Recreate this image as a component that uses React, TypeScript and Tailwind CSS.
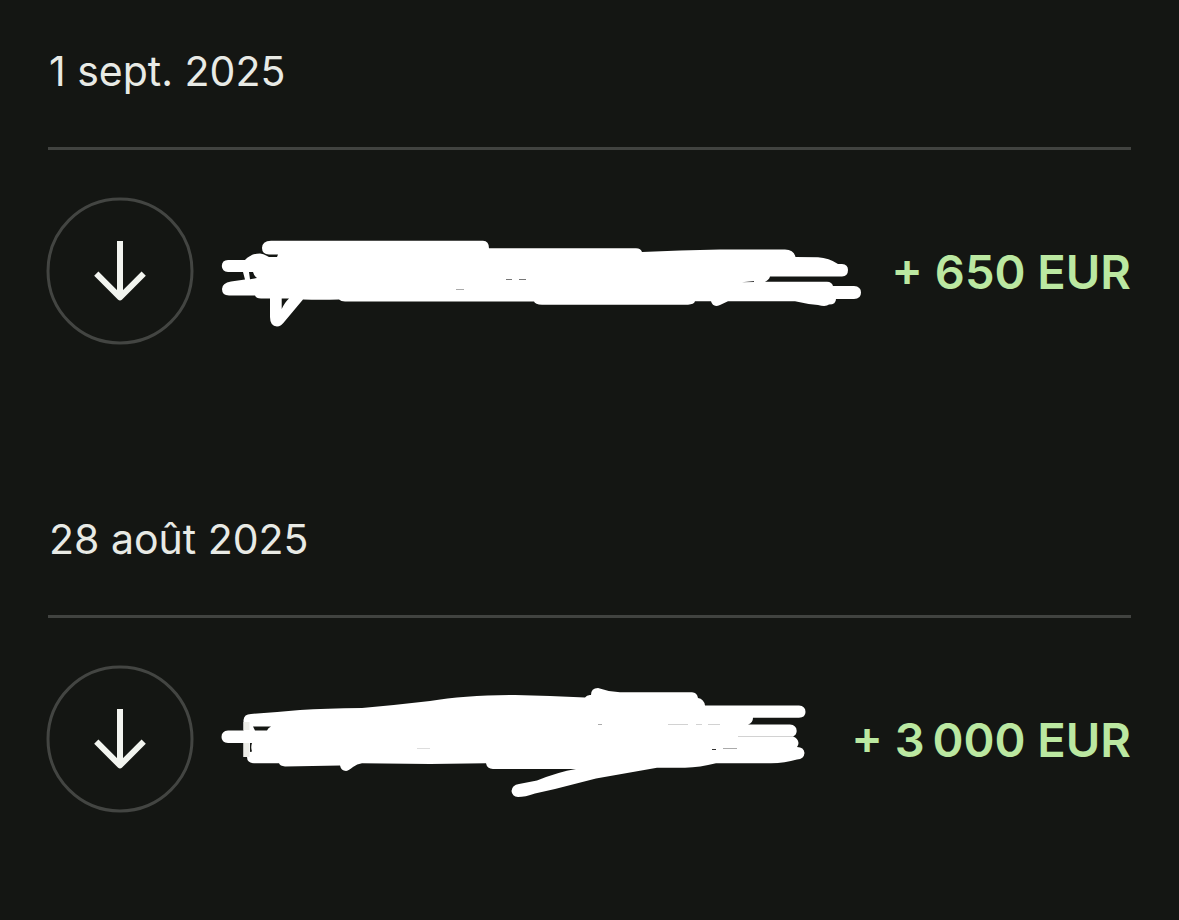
import type { ReactNode } from "react";

function ArrowDownBadge() {
  return (
    <svg
      viewBox="0 0 144 144"
      className="size-36 shrink-0 overflow-visible"
      fill="none"
      aria-hidden="true"
    >
      <circle cx="72" cy="72" r="72" stroke="#434542" strokeWidth="3" />
      <path
        d="M72 42V98M48.3 74.7L72 98.4L95.7 74.7"
        stroke="#f2f4ef"
        strokeWidth="6"
        strokeLinejoin="round"
      />
    </svg>
  );
}

function FirstScribble() {
  return (
    <svg viewBox="220 199 644 144" className="h-36 w-[644px] min-w-0" aria-hidden="true">
      <path
        fill="#fff"
        fillRule="evenodd"
        d="M262 248Q262 241 271 240.7H483Q489 241 489 248.3H636Q641 248.5 642 252L680 250.5L720 249.5H785Q794 250 795.5 257L818 257.3Q829 258 838 264H842Q848 264.5 848 270Q848 276 842 276.5H770Q769 280 765 281.8H827Q832 282 833 286H854Q861 286.5 861 292.5Q861 299 854 299H836Q836 304.5 829 304.5Q826 307 818 305Q806 304 795 301.3H728L720 305Q713 308 711 301.3H695Q694 304.5 688 304.7H542Q535 304.5 534 301.5H345Q341 301.5 339 299.5Q320 300 303 299.5L285 321Q281 326.5 277 326.5Q270 326 270 317V298.5H261Q256 298.5 255 295.5H229Q222 295.5 222 289Q222 283 231 281.5L245 279.5L243 272H228Q222 271.5 221.8 266Q222 260 228 260H245Q251 253.5 260 253.5Q264 254 269 257H277L278 254.5H269Q262 254 262 248ZM249 272H253Q254 276 257 278L250 279.3ZM281.7 298.5H289Q285 302 281.7 309Z"
      />
      <path d="M506 279.5H512M519 279.5H526" stroke="#777" strokeWidth="1" />
      <path d="M456 289.5H464" stroke="#aaa" strokeWidth="1" />
      <path d="M742 282.2L754 281V282Z" fill="#333" />
    </svg>
  );
}

function SecondScribble() {
  return (
    <svg viewBox="220 667 588 144" className="h-36 w-[588px] min-w-0" aria-hidden="true">
      <path
        fill="#fff"
        fillRule="evenodd"
        d="M243.5 720Q244 714 251 714Q276 712 300 710Q325 708.5 362 708Q396 705 430 701Q465 695 515 695Q550 695.5 585 697.5Q587 694.5 591 695Q591 688 598 688Q609 692 620 692.3H692Q697 692.5 698 698Q704 699 705 705.5H799Q805.5 706 805.5 712Q805.5 717.5 799 717.7H753Q753 723 748 724.5H790Q796.5 725 796.7 731Q796.5 735 793 736.5Q798 738 798.5 743Q798.5 745 797 747Q804 747 804.5 753Q804 759 797 759.5Q785 763 771 763.3H716Q700 767.5 685 767.7H657L596 778.5L555 789L535 793.5Q525 797 518 797Q512 796.5 511.5 791Q512 785 519 784L537 780.5Q558 772 576 769H493Q487 769 486 763.3L430 764L362 763.3Q357 764 353 767Q348 771 346 771Q341 770.5 340 765.5L285 766.5Q280 766 279 763.3H254Q247 763 247 757H243.5V743H228Q221.5 742.5 221.5 737Q221.5 731 228 730.5H243.5ZM253 726.5H271Q268 728 267 730.5H255ZM250 743H252Q250.5 747 252 751.5L250 752Z"
      />
      <path d="M246.5 722V730M246.5 743V757" stroke="#ecece7" strokeWidth="6" />
      <path
        d="M668 724.5H688M696 724.5H702M708 724.5H720M738 736.5H793"
        stroke="#d2d2d2"
        strokeWidth="1"
      />
      <path d="M723 748.5H737M598 724.5H602" stroke="#aaa" strokeWidth="1" />
      <path d="M417 748.5H430" stroke="#ddd" strokeWidth="1" />
      <path d="M712 749.5H716" stroke="#333" strokeWidth="1" />
    </svg>
  );
}

type DayProps = { date: string; amount: string; children: ReactNode };

function Day({ date, amount, children }: DayProps) {
  return (
    <section className="pb-[165px] last:pb-12">
      <h2 className="border-b-[3px] border-[#414340] pb-[45px] pl-px text-[41px] leading-[62px] font-normal text-[#e8eae5]">
        {date}
      </h2>
      <div className="flex items-center pt-[49px]">
        <ArrowDownBadge />
        <div className="ml-7 flex min-w-0 flex-1">{children}</div>
        <p className="shrink-0 pt-0.5 text-[47px] leading-[60px] font-semibold whitespace-nowrap text-[#bbe8a1]">
          {amount}
        </p>
      </div>
    </section>
  );
}

export default function App() {
  return (
    <main className="min-h-screen bg-[#141613] px-12 pt-10 font-['Inter',sans-serif]">
      <Day date="1 sept. 2025" amount="+ 650 EUR">
        <FirstScribble />
      </Day>
      <Day date="28 août 2025" amount={"+ 3\u202f000 EUR"}>
        <SecondScribble />
      </Day>
    </main>
  );
}
